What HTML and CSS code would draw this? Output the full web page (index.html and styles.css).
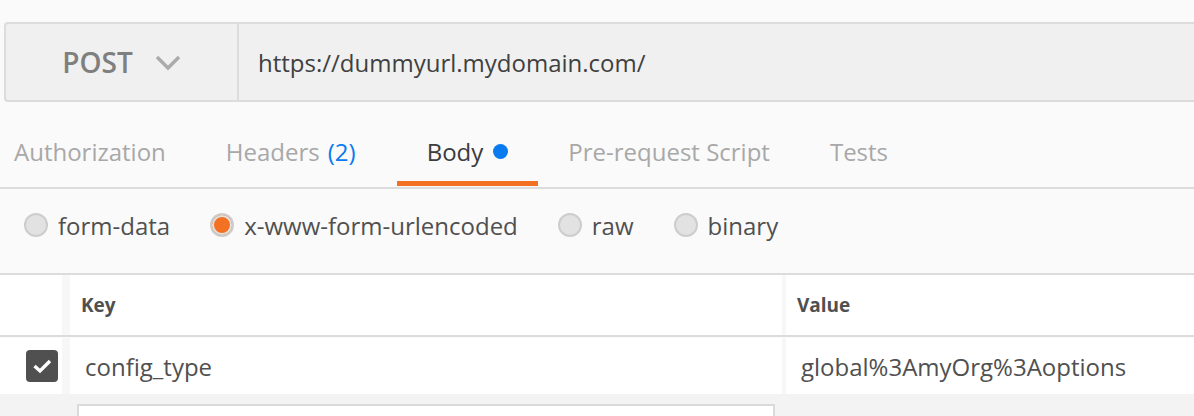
FILE: index.html
```html
<!DOCTYPE html>
<html lang="en">
<head>
    <meta charset="UTF-8">
    <title>Request Builder</title>
    <link rel="stylesheet" href="styles.css">
</head>
<body>
    <div class="url-bar">
        <div class="method">
            <span class="method-name">POST</span>
            <svg class="chevron" width="26" height="16" viewBox="0 0 26 16">
                <path d="M2 2 L13 13 L24 2" fill="none" stroke="#ababab" stroke-width="3.4"/>
            </svg>
        </div>
        <div class="url">https://dummyurl.mydomain.com/</div>
    </div>

    <div class="tabs">
        <div class="tab">Authorization</div>
        <div class="tab headers">Headers <span class="count">(2)</span></div>
        <div class="tab active">Body <span class="dot"></span></div>
        <div class="tab">Pre-request Script</div>
        <div class="tab">Tests</div>
    </div>

    <div class="body-modes">
        <label class="mode"><span class="radio"></span>form-data</label>
        <label class="mode"><span class="radio checked"></span>x-www-form-urlencoded</label>
        <label class="mode"><span class="radio"></span>raw</label>
        <label class="mode"><span class="radio"></span>binary</label>
    </div>

    <div class="params">
        <div class="row head">
            <div class="cell check"></div>
            <div class="cell key">Key</div>
            <div class="cell value">Value</div>
        </div>
        <div class="row">
            <div class="cell check">
                <span class="checkbox">
                    <svg width="20" height="16" viewBox="0 0 20 16">
                        <path d="M2.5 8 L8 13 L18 3" fill="none" stroke="#fff" stroke-width="3.4"/>
                    </svg>
                </span>
            </div>
            <div class="cell key">config_type</div>
            <div class="cell value">global%3AmyOrg%3Aoptions</div>
        </div>
        <div class="row new">
            <div class="new-key"></div>
        </div>
    </div>
</body>
</html>
```

FILE: styles.css
```css
body {
    margin: 0;
    background: #fafafa;
    font-family: "Open Sans", "Noto Sans", sans-serif;
    color: #505050;
    overflow: hidden;
}

/* Method + URL */
.url-bar {
    display: flex;
    height: 76px;
    margin: 22px 0 0 4px;
    background: #f0f0f0;
    border: 2px solid #dcdcdc;
    border-right: none;
    border-radius: 4px 0 0 4px;
}
.method {
    width: 231px;
    display: flex;
    align-items: center;
    justify-content: center;
    gap: 22px;
    border-right: 2px solid #dcdcdc;
}
.method-name {
    font-size: 28px;
    font-weight: 600;
    color: #7f7f7f;
}
.chevron {
    margin-top: 1px;
}
.url {
    display: flex;
    align-items: center;
    padding-left: 19px;
    font-size: 24px;
    color: #404040;
}

/* Tabs */
.tabs {
    display: flex;
    height: 85px;
    padding-left: 14px;
    border-bottom: 2px solid #dcdcdc;
}
.tab {
    display: flex;
    align-items: center;
    padding: 20px 30px 0;
    font-size: 24px;
    color: #a8a8a8;
    border-bottom: 5px solid transparent;
    margin-bottom: 1px;
}
.tab:first-child {
    padding-left: 0;
}
.tab.headers {
    margin-right: 11px;
}
.tab .count {
    color: #0a7bef;
    margin-left: 8px;
}
.tab.active {
    color: #3c3c3c;
    border-bottom-color: #f47023;
}
.dot {
    width: 15px;
    height: 15px;
    border-radius: 50%;
    background: #0a7bef;
    margin-left: 10px;
}

/* Body type radios */
.body-modes {
    display: flex;
    align-items: center;
    gap: 40px;
    height: 72px;
    padding: 0 0 12px 24px;
    border-bottom: 2px solid #dcdcdc;
}
.mode {
    display: flex;
    align-items: center;
    gap: 10px;
    font-size: 24px;
    color: #505050;
}
.radio {
    box-sizing: border-box;
    width: 24px;
    height: 24px;
    border-radius: 50%;
    border: 2px solid #cdcdcd;
    background: #e2e2e2;
}
.radio.checked {
    background: #f47023;
    box-shadow: inset 0 0 0 2px #e2e2e2;
}

/* Key / value table */
.row {
    display: flex;
    background: #f7f7f7;
}
.row.head {
    height: 60px;
    border-bottom: 2px solid #dcdcdc;
}
.row.head + .row {
    height: 56px;
    margin-top: 1px;
}
.cell {
    display: flex;
    align-items: center;
    background: #fff;
}
.cell.check {
    width: 62px;
    justify-content: flex-end;
    padding-right: 4px;
    box-sizing: border-box;
}
.cell.key {
    width: 712px;
    margin-left: 8px;
    padding-left: 15px;
    box-sizing: border-box;
    font-size: 24px;
}
.cell.value {
    flex: 1;
    margin-left: 4px;
    padding-left: 15px;
    font-size: 24px;
}
.head .cell {
    font-size: 19px;
    font-weight: 700;
}
.head .cell.key,
.head .cell.value {
    padding-left: 11px;
}
.checkbox {
    width: 32px;
    height: 32px;
    border-radius: 4px;
    background: #505050;
    display: flex;
    align-items: center;
    justify-content: center;
}
.row.new {
    height: 40px;
    background: #f3f3f3;
    padding: 10px 0 0 77px;
}
.new-key {
    width: 694px;
    height: 40px;
    background: #fff;
    border: 2px solid #dadada;
}
```
